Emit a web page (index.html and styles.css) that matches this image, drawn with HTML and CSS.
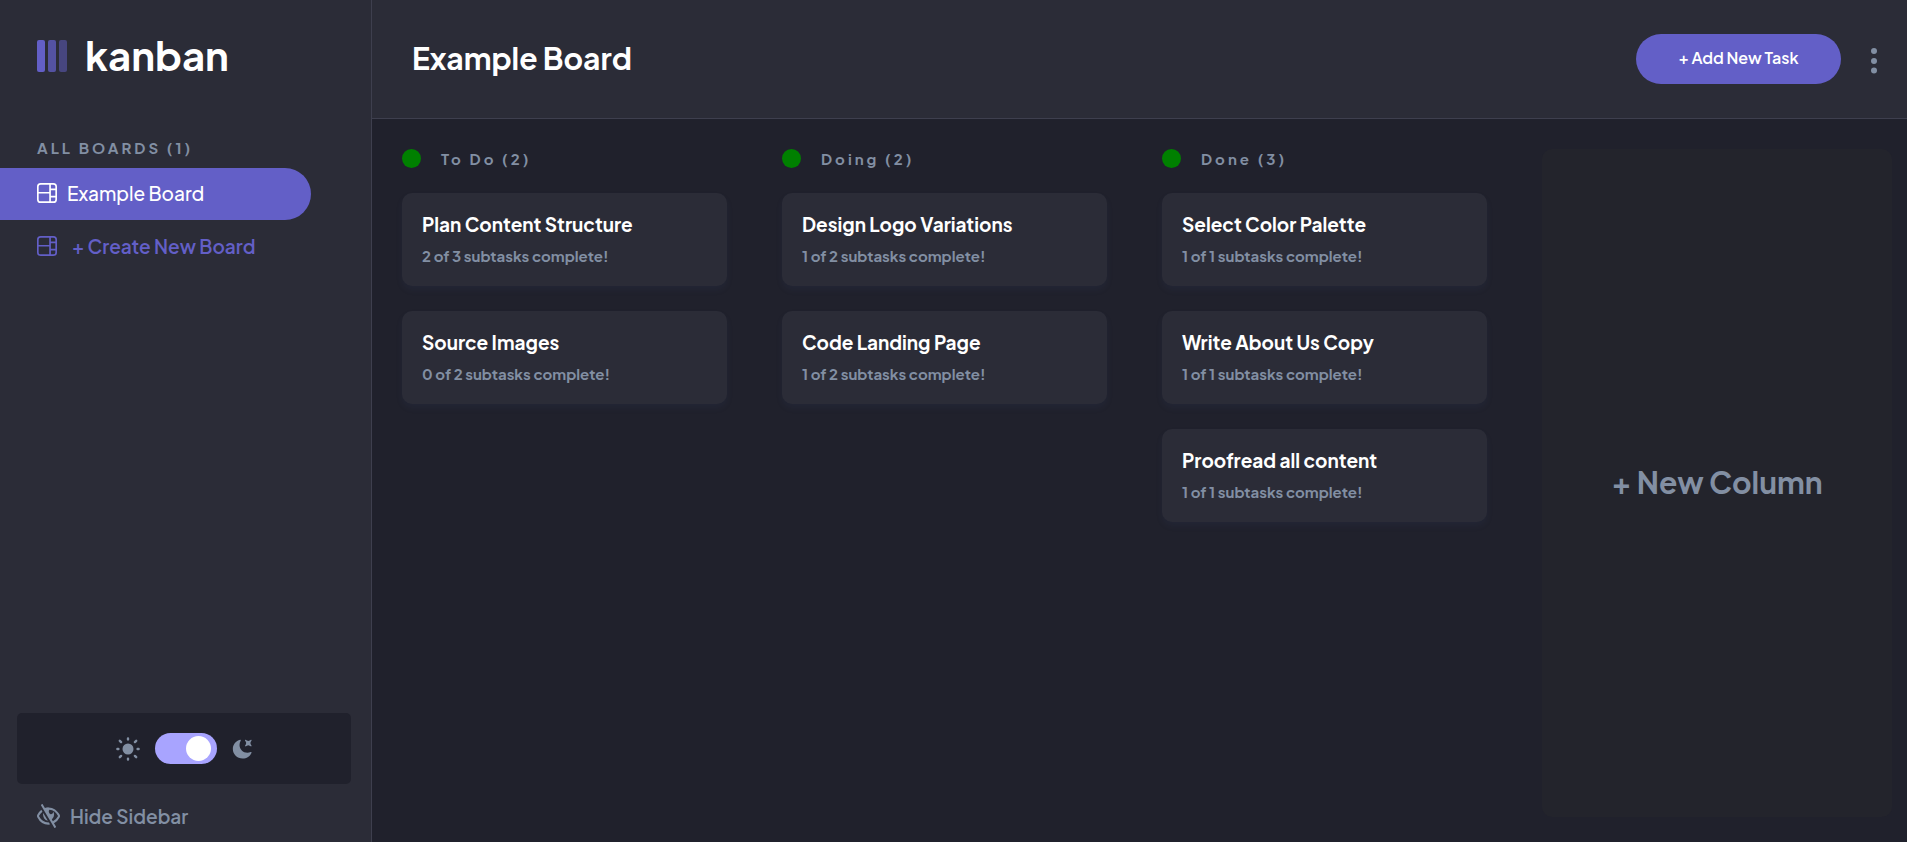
FILE: index.html
```html
<!DOCTYPE html>
<html lang="en">
<head>
<meta charset="utf-8">
<meta name="viewport" content="width=device-width, initial-scale=1">
<title>Kanban</title>
<link rel="stylesheet" href="styles.css">
</head>
<body>
<svg class="defs" aria-hidden="true">
  <symbol id="icon-board" viewBox="0 0 16 16">
    <path fill="currentColor" d="M0 2.889A2.889 2.889 0 0 1 2.889 0H13.11A2.889 2.889 0 0 1 16 2.889V13.11A2.888 2.888 0 0 1 13.111 16H2.89A2.889 2.889 0 0 1 0 13.111V2.89Zm1.333 5.555v4.667c0 .859.697 1.556 1.556 1.556h6.889V8.444H1.333Zm8.445-1.333V1.333h-6.89A1.556 1.556 0 0 0 1.334 2.89V7.11h8.445Zm4.889-1.333H11.11v4.444h3.556V5.778Zm0 5.778H11.11v3.11h2a1.556 1.556 0 0 0 1.556-1.555v-1.555Zm0-7.112V2.89a1.555 1.555 0 0 0-1.556-1.556h-2v3.111h3.556Z"/>
  </symbol>
</svg>
<div class="app">
  <aside class="sidebar">
    <div class="logo">
      <svg class="logo-mark" viewBox="0 0 30 32" aria-hidden="true">
        <g fill="#635fc7"><rect width="8" height="32" rx="2"/><rect x="11" width="8" height="32" rx="2" opacity=".75"/><rect x="22" width="8" height="32" rx="2" opacity=".5"/></g>
      </svg>
      <span class="logo-text">kanban</span>
    </div>
    <h2 class="boards-heading">ALL BOARDS (1)</h2>
    <nav class="boards">
      <a class="board-link board-link-active" href="#"><svg class="board-icon" aria-hidden="true"><use href="#icon-board"/></svg>Example Board</a>
      <button class="board-link board-create" type="button"><svg class="board-icon" aria-hidden="true"><use href="#icon-board"/></svg>+ Create New Board</button>
    </nav>
    <div class="theme">
      <svg class="sun" viewBox="0 0 24 24" aria-hidden="true">
        <circle cx="12" cy="12" r="5.5" fill="#828fa3"/>
        <path d="M12 1.4v1M12 21.6v1M1.4 12h1M21.6 12h1M3.8 3.8l1.3 1.3M18.9 18.9l1.3 1.3M3.8 20.2l1.3-1.3M18.9 5.1l1.3-1.3" stroke="#828fa3" stroke-width="2.4" stroke-linecap="round"/>
      </svg>
      <input class="toggle" type="checkbox" role="switch" aria-label="Dark mode" checked>
      <svg class="moon" viewBox="0 0 16 16" aria-hidden="true">
        <path fill="#828fa3" d="M6.474.682c.434-.11.718.406.481.78A6.067 6.067 0 0 0 6.01 4.72c0 3.418 2.827 6.187 6.314 6.187.89.002 1.77-.182 2.584-.54.408-.18.894.165.724.57-1.16 2.775-3.944 4.73-7.194 4.73-4.292 0-7.771-3.41-7.771-7.615 0-3.541 2.466-6.518 5.807-7.37Zm8.433.07c.442-.294.969.232.674.674l-.525.787a1.943 1.943 0 0 0 0 2.157l.525.788c.295.441-.232.968-.674.673l-.787-.525a1.943 1.943 0 0 0-2.157 0l-.786.525c-.442.295-.97-.232-.675-.673l.525-.788a1.943 1.943 0 0 0 0-2.157l-.525-.787c-.295-.442.232-.968.674-.673l.787.525a1.943 1.943 0 0 0 2.157 0l.787-.525Z"/>
      </svg>
    </div>
    <button class="hide" type="button">
      <svg class="hide-icon" viewBox="0 0 18 16" preserveAspectRatio="none" aria-hidden="true">
        <path fill="currentColor" d="M8.522 11.223a4.252 4.252 0 0 1-3.654-5.22l3.654 5.22ZM9 12.25A8.685 8.685 0 0 1 1.5 8a8.612 8.612 0 0 1 2.76-2.864l-.86-1.23A10.112 10.112 0 0 0 .208 7.238a1.5 1.5 0 0 0 0 1.524A10.187 10.187 0 0 0 9 13.75c.414 0 .828-.025 1.239-.074l-1-1.43A8.88 8.88 0 0 1 9 12.25Zm8.792-3.488a10.14 10.14 0 0 1-4.486 4.046l1.504 2.148a.375.375 0 0 1-.092.523l-.648.453a.375.375 0 0 1-.523-.092L3.19 1.044A.375.375 0 0 1 3.282.52L3.93.068a.375.375 0 0 1 .523.092l1.735 2.479A10.308 10.308 0 0 1 9 2.25c3.746 0 7.031 2 8.792 4.988a1.5 1.5 0 0 1 0 1.524ZM16.5 8a8.674 8.674 0 0 0-6.755-4.219A1.75 1.75 0 1 0 12.75 5v-.001a4.25 4.25 0 0 1-1.154 5.366l.834 1.192A8.641 8.641 0 0 0 16.5 8Z"/>
      </svg>
      Hide Sidebar
    </button>
  </aside>
  <div class="content">
    <header class="header">
      <h1 class="title">Example Board</h1>
      <button class="add-task" type="button">+ Add New Task</button>
      <button class="menu" type="button" aria-label="Board options">
        <svg class="menu-icon" viewBox="0 0 6 26" aria-hidden="true"><g fill="#828fa3"><circle cx="3" cy="3" r="3"/><circle cx="3" cy="13" r="3"/><circle cx="3" cy="22.5" r="3"/></g></svg>
      </button>
    </header>
    <main class="board">
      <section class="column">
        <h2 class="column-head"><span class="dot"></span>To Do (2)</h2>
        <article class="card"><h3 class="card-title">Plan Content Structure</h3><p class="card-sub">2 of 3 subtasks complete!</p></article>
        <article class="card"><h3 class="card-title">Source Images</h3><p class="card-sub">0 of 2 subtasks complete!</p></article>
      </section>
      <section class="column">
        <h2 class="column-head"><span class="dot"></span>Doing (2)</h2>
        <article class="card"><h3 class="card-title">Design Logo Variations</h3><p class="card-sub">1 of 2 subtasks complete!</p></article>
        <article class="card"><h3 class="card-title">Code Landing Page</h3><p class="card-sub">1 of 2 subtasks complete!</p></article>
      </section>
      <section class="column">
        <h2 class="column-head"><span class="dot"></span>Done (3)</h2>
        <article class="card"><h3 class="card-title">Select Color Palette</h3><p class="card-sub">1 of 1 subtasks complete!</p></article>
        <article class="card"><h3 class="card-title">Write About Us Copy</h3><p class="card-sub">1 of 1 subtasks complete!</p></article>
        <article class="card"><h3 class="card-title">Proofread all content</h3><p class="card-sub">1 of 1 subtasks complete!</p></article>
      </section>
      <button class="new-column" type="button">+ New Column</button>
    </main>
  </div>
</div>
</body>
</html>
```

FILE: styles.css
```css
* { box-sizing: border-box; margin: 0; }

body {
  background: #20212c;
  color: #fff;
  font-family: "Plus Jakarta Sans", Inter, "Open Sans", sans-serif;
  font-weight: 600;
}

button {
  border: 0;
  padding: 0;
  background: none;
  color: inherit;
  font: inherit;
  cursor: pointer;
}

svg { display: block; flex: none; }

.defs { position: absolute; width: 0; height: 0; }

.app { display: flex; min-height: 100vh; }

.sidebar {
  display: flex;
  flex-direction: column;
  flex: none;
  width: 372px;
  padding-bottom: 12px;
  background: #2b2c37;
  border-right: 1px solid #3e3f4e;
}

.logo {
  display: flex;
  align-items: center;
  gap: 18px;
  height: 112px;
  padding-left: 37px;
}

.logo-mark { width: 30px; height: 32px; }

.logo-text {
  font-size: 40px;
  font-weight: 700;
  line-height: 48px;
  padding-bottom: 2px;
}

.boards-heading {
  padding: 24px 0 8px 37px;
  color: #828fa3;
  font-size: 15px;
  font-weight: 700;
  line-height: 24px;
  letter-spacing: 3px;
}

.board-link {
  display: flex;
  align-items: center;
  gap: 10px;
  width: 311px;
  height: 52px;
  padding: 0 0 2px 37px;
  font-size: 19px;
  font-weight: 500;
  color: #fff;
  text-decoration: none;
}

.board-link-active {
  background: #635fc7;
  border-radius: 0 26px 26px 0;
}

.board-create {
  gap: 15px;
  padding-bottom: 0;
  color: #635fc7;
  font-weight: 600;
}

.board-icon { width: 20px; height: 20px; }

.theme {
  display: flex;
  align-items: center;
  justify-content: center;
  gap: 15px;
  height: 71px;
  margin: auto 20px 17px 17px;
  background: #20212c;
  border-radius: 5px;
}

.sun { width: 24px; height: 24px; }
.moon { width: 20px; height: 20px; }

.toggle {
  appearance: none;
  display: flex;
  align-items: center;
  justify-content: flex-end;
  width: 62px;
  height: 31px;
  margin: 0;
  padding: 0 6px;
  border-radius: 16px;
  background: #a8a4ff;
  cursor: pointer;
}

.toggle:not(:checked) { justify-content: flex-start; }

.toggle::before {
  content: "";
  width: 25px;
  height: 25px;
  border-radius: 50%;
  background: #fff;
}

.hide {
  display: flex;
  align-items: center;
  gap: 10px;
  height: 29px;
  padding-left: 37px;
  color: #828fa3;
  font-size: 19px;
}

.hide-icon { width: 23px; height: 24px; }

.content {
  display: flex;
  flex: 1;
  flex-direction: column;
  min-width: 0;
}

.header {
  display: flex;
  align-items: center;
  height: 119px;
  padding: 0 24px 0 40px;
  background: #2b2c37;
  border-bottom: 1px solid #3e3f4e;
}

.title {
  flex: 1;
  padding-bottom: 2px;
  font-size: 30px;
  font-weight: 700;
}

.add-task {
  width: 205px;
  height: 50px;
  padding-bottom: 4px;
  border-radius: 25px;
  background: #635fc7;
  font-size: 16px;
  font-weight: 600;
}

.menu { padding: 10px 6px 6px; margin-left: 24px; }
.menu-icon { width: 6px; height: 26px; }

.board {
  display: flex;
  flex: 1;
  gap: 55px;
  padding: 30px 15px 25px 30px;
}

.column {
  display: flex;
  flex: none;
  flex-direction: column;
  gap: 25px;
  width: 325px;
}

.column-head {
  display: flex;
  align-items: center;
  gap: 20px;
  height: 19px;
  color: #828fa3;
  font-size: 15px;
  font-weight: 700;
  line-height: 18px;
  letter-spacing: 3px;
}

.dot {
  width: 19px;
  height: 19px;
  border-radius: 50%;
  background: #008000;
}

.card {
  padding: 19px 20px 20px;
  border-radius: 10px;
  background: #2b2c37;
  box-shadow: 0 4px 6px rgba(54, 78, 126, 0.1);
}

.card-title {
  font-size: 19px;
  font-weight: 700;
  line-height: 24px;
}

.card-sub {
  margin-top: 10px;
  color: #828fa3;
  font-size: 15px;
  font-weight: 700;
  line-height: 20px;
}

.new-column {
  flex: 1;
  min-width: 240px;
  padding-bottom: 2px;
  border-radius: 10px;
  background: #23242c;
  color: #828fa3;
  font-size: 30px;
  font-weight: 700;
}
```
